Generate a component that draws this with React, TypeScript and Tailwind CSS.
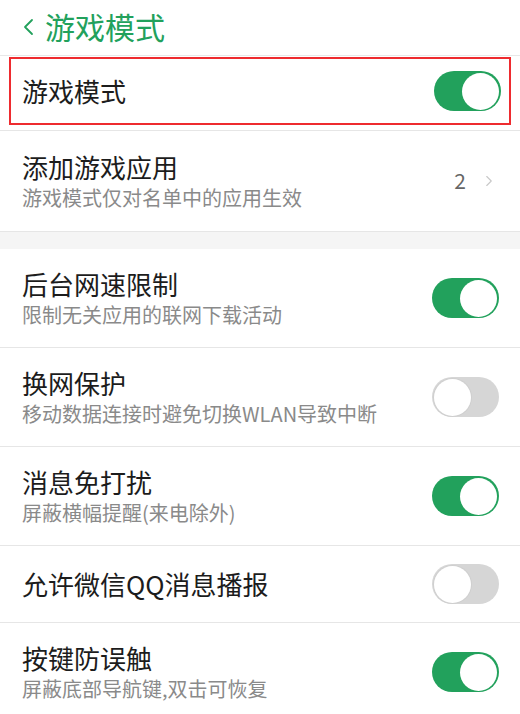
import { ChevronRight } from 'lucide-react'

type Row = {
    title: string
    desc?: string
    on: boolean
}

const rows: Row[] = [
    { title: '后台网速限制', desc: '限制无关应用的联网下载活动', on: true },
    { title: '换网保护', desc: '移动数据连接时避免切换WLAN导致中断', on: false },
    { title: '消息免打扰', desc: '屏蔽横幅提醒(来电除外)', on: true },
    { title: '允许微信QQ消息播报', on: false },
    { title: '按键防误触', desc: '屏蔽底部导航键,双击可恢复', on: true },
]

function Toggle({ on }: { on: boolean }) {
    return on ? (
        <div className="w-[67px] h-[40px] rounded-full bg-[#22a15c] flex items-center justify-end pr-[2px] shrink-0">
            <div className="w-[37px] h-[37px] rounded-full bg-white" />
        </div>
    ) : (
        <div className="w-[67px] h-[40px] rounded-full bg-[#d6d6d6] flex items-center pl-[2px] shrink-0">
            <div className="w-[37px] h-[37px] rounded-full bg-white shadow-[0_0_0_1px_#cfcfcf]" />
        </div>
    )
}

export default function App() {
    return (
        <div className="w-[520px] h-[714px] overflow-hidden bg-white font-['Noto_Sans_CJK_SC',sans-serif]">
            {/* Header */}
            <div className="h-[56px] flex items-center pl-[22px] border-b border-[#e8e8e8]">
                <svg width="12" height="18" viewBox="0 0 12 18" className="-mt-[2px]">
                    <polyline points="10,2 3,9 10,16" fill="none" stroke="#22a15c" strokeWidth="1.8" strokeLinecap="round" strokeLinejoin="round" />
                </svg>
                <span className="ml-[11px] text-[30px] leading-[40px] text-[#22a15c] font-normal -mt-[4px]">游戏模式</span>
            </div>

            {/* Game mode switch, highlighted */}
            <div className="h-[75px] border-b border-[#e6e6e6] pt-[1px]">
                <div className="mx-[9px] h-[68px] border-2 border-[#ee2b2f] flex items-center justify-between pl-[11px] pr-[8px]">
                    <span className="text-[26px] leading-[34px] text-[#1c1c1c]">游戏模式</span>
                    <Toggle on={true} />
                </div>
            </div>

            {/* Add apps */}
            <div className="h-[101px] border-b border-[#e6e6e6] flex items-center justify-between px-[22px]">
                <div className="flex flex-col">
                    <span className="text-[26px] leading-[34px] text-[#1c1c1c]">添加游戏应用</span>
                    <span className="text-[20px] leading-[28px] text-[#8a8a8a]">游戏模式仅对名单中的应用生效</span>
                </div>
                <div className="flex items-center gap-[14px]">
                    <span className="text-[21px] text-[#666666]">2</span>
                    <ChevronRight className="w-[18px] h-[18px] text-[#c8c8c8]" strokeWidth={1.5} />
                </div>
            </div>

            <div className="h-[17px] bg-[#f5f5f5]" />

            {rows.map((row) => (
                <div
                    key={row.title}
                    className={`${row.desc ? 'h-[99px]' : 'h-[77px]'} border-b border-[#e6e6e6] flex items-center justify-between pl-[22px] pr-[21px]`}
                >
                    <div className="flex flex-col">
                        <span className="text-[26px] leading-[34px] text-[#1c1c1c]">{row.title}</span>
                        {row.desc && <span className="text-[20px] leading-[28px] text-[#8a8a8a]">{row.desc}</span>}
                    </div>
                    <Toggle on={row.on} />
                </div>
            ))}
        </div>
    )
}
